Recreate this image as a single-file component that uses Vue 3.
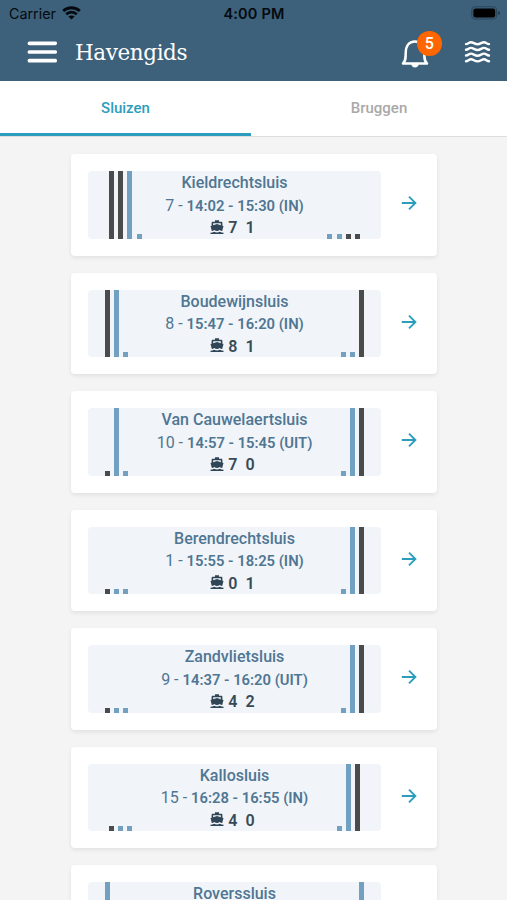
<script setup>
import { ref } from 'vue'

const activeTab = ref('sluizen')
const notifications = ref(5)

const tabs = [
  { id: 'sluizen', label: 'Sluizen' },
  { id: 'bruggen', label: 'Bruggen' },
]

// gates: D/B = closed (full height) dark/blue, d/b = open (stub) dark/blue
const locks = ref([
  { name: 'Kieldrechtsluis', nr: 7, time: '14:02 - 15:30 (IN)', ships: [7, 1], left: 'DDBb', right: 'bbdd' },
  { name: 'Boudewijnsluis', nr: 8, time: '15:47 - 16:20 (IN)', ships: [8, 1], left: 'DBb', right: 'bbD' },
  { name: 'Van Cauwelaertsluis', nr: 10, time: '14:57 - 15:45 (UIT)', ships: [7, 0], left: 'dBb', right: 'bBD' },
  { name: 'Berendrechtsluis', nr: 1, time: '15:55 - 18:25 (IN)', ships: [0, 1], left: 'dbb', right: 'bBD' },
  { name: 'Zandvlietsluis', nr: 9, time: '14:37 - 16:20 (UIT)', ships: [4, 2], left: 'dbb', right: 'bBD' },
  { name: 'Kallosluis', nr: 15, time: '16:28 - 16:55 (IN)', ships: [4, 0], left: 'dbb', right: 'bBD', inset: true },
  { name: 'Roverssluis', left: 'B', right: 'B' },
])

function gateClass(g) {
  return {
    dark: g.toLowerCase() === 'd',
    closed: g === g.toUpperCase(),
  }
}
</script>

<template>
  <div class="app">
    <header class="top">
      <div class="status">
        <div class="carrier">
          <span>Carrier</span>
          <svg width="19" height="14" viewBox="0 0 19 14">
            <g fill="none" stroke="#050a0e" stroke-width="2.8">
              <path d="M1.2 5.1C5.8.6 13.2.6 17.8 5.1" />
              <path d="M4.2 8.3c3-2.9 7.6-2.9 10.6 0" />
            </g>
            <path d="M9.5 13.6L6.4 10.5c1.8-1.5 4.4-1.5 6.2 0z" fill="#050a0e" />
          </svg>
        </div>
        <span class="clock">4:00 PM</span>
        <svg class="battery" width="30" height="14" viewBox="0 0 30 14">
          <rect x=".8" y=".8" width="24.8" height="12.2" rx="3.6" fill="none" stroke="#2b4559" stroke-width="1.1" />
          <rect x="2.4" y="2.4" width="21.8" height="9" rx="2.2" fill="#000" />
          <path d="M27 5v4c1.3-.5 2-1.1 2-2s-.7-1.5-2-2z" fill="#213a4c" />
        </svg>
      </div>
      <div class="bar">
        <svg class="menu" width="30" height="22" viewBox="0 0 30 22">
          <path d="M2.4 2.3h25.8M2.4 11h25.8M2.4 19.7h25.8" stroke="#fff" stroke-width="3.7" stroke-linecap="round" />
        </svg>
        <h1>Havengids</h1>
        <div class="bell">
          <svg width="28" height="29" viewBox="0 0 28 29">
            <path d="M2 24.5c2.600-2.600 2.700-5 2.700-10.300C4.700 7.200 7.800 2.500 14 2.500s9.300 4.700 9.300 11.700c0 5.300.1 7.700 2.700 10.300z" fill="none" stroke="#fff" stroke-width="2.5" stroke-linejoin="round" />
            <path d="M10.200 25h7.600c-.3 2.200-1.800 3.400-3.800 3.400s-3.500-1.200-3.800-3.400z" fill="#fff" />
          </svg>
          <span class="badge">{{ notifications }}</span>
        </div>
        <svg class="waves" width="27" height="22" viewBox="0 0 27 22">
          <g fill="none" stroke="#fff" stroke-width="2.4" stroke-linecap="round">
            <path v-for="y in [2.3, 8, 13.7, 19.4]" :key="y" :d="`M2 ${y + .8}c2.300 0 2.800-1.900 5-1.900s3.800 2.100 6.500 2.100 4.300-2.100 6.500-2.100 2.700 1.900 5 1.900`" />
          </g>
        </svg>
      </div>
    </header>

    <nav class="tabs">
      <button
        v-for="t in tabs"
        :key="t.id"
        type="button"
        :class="{ active: activeTab === t.id }"
        @click="activeTab = t.id"
      >
        {{ t.label }}
      </button>
    </nav>

    <main class="list">
      <article v-for="l in locks" :key="l.name" class="card">
        <div class="panel" :class="{ inset: l.inset, four: l.left.length === 4 }">
          <div class="gates">
            <i v-for="(g, i) in l.left" :key="i" :class="gateClass(g)"></i>
          </div>
          <div class="info">
            <div class="name">{{ l.name }}</div>
            <div v-if="l.time" class="time"><span>{{ l.nr }} - </span><b>{{ l.time }}</b></div>
            <div v-if="l.ships" class="ships">
              <svg width="14" height="15" viewBox="0 0 14 15" fill="#304656">
                <path d="M5 .2h4v1.500h2.100c.8 0 1.300.5 1.300 1.300v2.700l1.100.4-1.300 5c-.9 0-1.700-.4-2.500-1-1.600 1.300-3.800 1.300-5.400 0-.8.600-1.600 1-2.500 1L.5 6.100l1.100-.4V3c0-.8.500-1.300 1.300-1.300H5zM3.200 3.200v2L7 4l3.800 1.200v-2z" />
                <path d="M.5 12.700c1.300 0 2.500-.3 3.600-1 1.800.9 4 .9 5.800 0 1.100.7 2.300 1 3.600 1v1.300H.5z" />
              </svg>
              <span v-for="(n, i) in l.ships" :key="i">{{ n }}</span>
            </div>
          </div>
          <div class="gates right">
            <i v-for="(g, i) in l.right" :key="i" :class="gateClass(g)"></i>
          </div>
        </div>
        <svg class="arrow" width="16" height="16" viewBox="0 0 16 16">
          <path d="M.8 8h13.400M8 1.600L14.400 8 8 14.400" fill="none" stroke="#2b9dbd" stroke-width="1.9" />
        </svg>
      </article>
    </main>
  </div>
</template>

<style>
body {
  margin: 0;
  overflow: hidden;
}
</style>

<style scoped>
.app {
  height: 900px;
  overflow: hidden;
  background: #f4f4f4;
  font-family: Roboto, "Liberation Sans", sans-serif;
}

.top {
  height: 81px;
  background: #3d607b;
}

.status {
  display: grid;
  grid-template-columns: 1fr auto 1fr;
  align-items: center;
  height: 27px;
  padding: 0 6px 0 9px;
  font: 14.3px Inter, "Liberation Sans", sans-serif;
  color: #050a0e;
}
.carrier { display: flex; align-items: center; gap: 6px; }
.carrier svg { margin-top: -2px; }
.clock {
  margin-right: 2px;
  font-weight: 600;
  font-size: 14.5px;
  letter-spacing: .2px;
}
.battery { justify-self: end; margin-top: -1px; }

.bar {
  display: flex;
  align-items: center;
  height: 50px;
  padding: 0 16px 0 27px;
}
h1 {
  flex: 1;
  margin: 0 0 0 18px;
  font: 400 21.5px "DejaVu Serif", serif;
  letter-spacing: -.4px;
  color: #fff;
}
.bell {
  position: relative;
  height: 29px;
  margin: 3px 35px 0 0;
}
.badge {
  position: absolute;
  left: 16px;
  top: -8px;
  width: 24.5px;
  height: 24.5px;
  border-radius: 50%;
  background: #ff6600;
  color: #fff;
  font-size: 16px;
  font-weight: 500;
  line-height: 25px;
  text-align: center;
}

.tabs {
  display: flex;
  height: 55px;
  background: #fff;
  border-bottom: 1px solid #dcdfe1;
}
.tabs button {
  flex: 1;
  padding: 2px 0 0;
  border: none;
  border-bottom: 3px solid transparent;
  background: transparent;
  font: 500 15px Roboto, sans-serif;
  color: #a9a9a9;
}
.tabs button:first-child { flex: 0 0 251px; }
.tabs button.active {
  border-color: #2d9dbd;
  color: #2d9dbd;
}

.list {
  display: flex;
  flex-direction: column;
  gap: 17.1px;
  padding: 17.4px 70px 0 71px;
}
.card {
  display: flex;
  flex: none;
  align-items: center;
  box-sizing: border-box;
  height: 101.4px;
  padding: 0 20.5px 0 17px;
  border-radius: 4px;
  background: #fff;
  box-shadow: 0 2px 4px rgba(0, 0, 0, .08);
}
.panel {
  display: flex;
  justify-content: space-between;
  box-sizing: border-box;
  width: 293px;
  height: 67.2px;
  padding: 0 17px;
  border-radius: 4px;
  background: #f1f4f8;
}
.panel.inset, .panel.four { padding: 0 21.2px; }
.arrow { margin: 0 0 4px auto; }

.gates {
  display: flex;
  flex: 1 0 0;
  align-items: flex-end;
  gap: 4.15px;
}
.gates.right { justify-content: flex-end; }
.gates i {
  width: 5px;
  height: 5px;
  background: #71a0c0;
}
.gates i.dark { background: #4b4b4b; }
.gates i.closed { height: 100%; }

.info {
  flex: none;
  padding-top: 1px;
  line-height: 22.4px;
  text-align: center;
  white-space: nowrap;
  color: #4f7693;
}
.name {
  font-size: 16px;
  font-weight: 500;
}
.time { font-size: 16px; }
.time b { font-size: 14.8px; font-weight: 600; }
.ships {
  display: flex;
  align-items: center;
  justify-content: center;
  height: 22.4px;
  font-size: 16px;
  font-weight: 600;
  color: #374a57;
}
.ships svg { margin: -2px 4px 0 -4px; }
.ships span + span { margin-left: 8px; }
</style>
